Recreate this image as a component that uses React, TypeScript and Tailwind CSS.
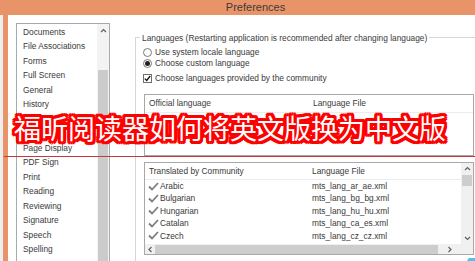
import React from "react";

const PAGES = [
  "Documents",
  "File Associations",
  "Forms",
  "Full Screen",
  "General",
  "History",
  "Identity",
  "Languages",
  "Page Display",
  "PDF Sign",
  "Print",
  "Reading",
  "Reviewing",
  "Signature",
  "Speech",
  "Spelling",
  "Trust Manager",
];

const COMMUNITY = [
  ["Arabic", "mts_lang_ar_ae.xml"],
  ["Bulgarian", "mts_lang_bg_bg.xml"],
  ["Hungarian", "mts_lang_hu_hu.xml"],
  ["Catalan", "mts_lang_ca_es.xml"],
  ["Czech", "mts_lang_cz_cz.xml"],
];

function Arrow({ dir }: { dir: "up" | "down" | "left" | "right" }) {
  const d = {
    up: "M1 4 L3.5 1.5 L6 4",
    down: "M1 2 L3.5 4.5 L6 2",
    left: "M4.5 1 L2 3.5 L4.5 6",
    right: "M2.5 1 L5 3.5 L2.5 6",
  }[dir];
  return (
    <svg width="7" height="7" viewBox="0 0 7 7" className="shrink-0">
      <path d={d} fill="none" stroke="#606060" strokeWidth="1.2" />
    </svg>
  );
}

function Check() {
  return (
    <svg width="11" height="9" viewBox="0 0 11 9" className="shrink-0">
      <path d="M1 4.5 L4 7.5 L10 1" fill="none" stroke="#7d7d7d" strokeWidth="1.8" />
    </svg>
  );
}

function Radio({ on }: { on?: boolean }) {
  return (
    <span className="flex h-[9px] w-[9px] shrink-0 items-center justify-center rounded-full border border-[#7a7a7a] bg-white">
      {on && <span className="h-[5px] w-[5px] rounded-full bg-[#222]" />}
    </span>
  );
}

export default function App() {
  return (
    <div className="relative h-[261px] w-[475px] overflow-hidden bg-white font-['Liberation_Sans',Arial,sans-serif] text-[8.35px] text-[#3a3a3a]">
      <div className="flex h-[15px] items-center justify-center bg-[#e99468] pl-[36px] text-[11px] text-[#3d3a38]">
        Preferences
      </div>
      <div className="flex h-[246px]">
        <div className="w-[3px] bg-[#eeeeee]" />
        <div className="w-[5px] bg-[#e99468]" />
        <div className="flex flex-1 pl-[8px] pt-[8px]">
          {/* page list */}
          <div className="flex h-[250px] w-[94px] shrink-0 border border-[#a4abb3] bg-white">
            <div className="flex-1 pt-[1px]">
              {PAGES.map((p) => (
                <div key={p} className="flex h-[14.5px] items-center pl-[6px]">
                  {p}
                </div>
              ))}
            </div>
            <div className="flex w-[12px] flex-col items-center bg-[#f3f3f3]">
              <div className="flex h-[15px] items-center">
                <Arrow dir="up" />
              </div>
              <div className="mt-[31px] w-[10px] flex-1 bg-[#cbcbcb]" />
            </div>
          </div>

          {/* languages group */}
          <div className="ml-[25px] mt-[14px] flex-1 border-l border-t border-[#d6d6d6] pl-[7px]">
            <div className="-ml-[3px] -mt-[5px] w-fit bg-white px-[2px] leading-[10px]">
              Languages (Restarting application is recommended after changing language)
            </div>
            <div className="mt-[3.5px] flex h-[11px] items-center gap-[3px]">
              <Radio />
              Use system locale language
            </div>
            <div className="flex h-[11px] items-center gap-[3px]">
              <Radio on />
              Choose custom language
            </div>
            <div className="mt-[4px] flex h-[11px] items-center gap-[3px]">
              <span className="flex h-[9px] w-[9px] shrink-0 items-center justify-center border border-[#707070] bg-white">
                <svg width="7" height="7" viewBox="0 0 7 7">
                  <path d="M0.8 3.6 L2.7 5.5 L6.2 1" fill="none" stroke="#111" strokeWidth="1.3" />
                </svg>
              </span>
              Choose languages provided by the community
            </div>

            {/* official languages */}
            <div className="ml-[1px] mt-[10.5px] h-[62px] w-[330px] border border-[#a8a8a8] bg-white">
              <div className="flex h-[18px] items-center border-b border-[#ececec]">
                <div className="w-[167px] pl-[4px]">Official language</div>
                <div className="pl-[1px]">Language File</div>
              </div>
            </div>

            {/* community languages */}
            <div className="ml-[1px] mt-[6px] flex h-[93px] w-[330px] flex-col border border-[#a8a8a8] bg-white">
              <div className="flex min-h-0 flex-1">
                <div className="flex-1">
                  <div className="flex h-[17px] items-center border-b border-[#ececec]">
                    <div className="w-[167px] pl-[4px]">Translated by Community</div>
                    <div>Language File</div>
                  </div>
                  {COMMUNITY.map(([name, file]) => (
                    <div key={name} className="flex h-[12.4px] items-center">
                      <div className="flex w-[167px] items-center gap-[1px] pl-[3px]">
                        <Check />
                        {name}
                      </div>
                      <div>{file}</div>
                    </div>
                  ))}
                </div>
                <div className="flex w-[12px] flex-col items-center bg-[#f0f0f0]">
                  <div className="flex h-[12px] items-center">
                    <Arrow dir="up" />
                  </div>
                  <div className="h-[11px] w-[10px] bg-[#cdcdcd]" />
                  <div className="flex-1" />
                  <div className="flex h-[12px] items-center">
                    <Arrow dir="down" />
                  </div>
                </div>
              </div>
              <div className="flex h-[10px] items-center bg-[#f0f0f0]">
                <div className="flex w-[10px] justify-center">
                  <Arrow dir="left" />
                </div>
                <div className="h-[9px] w-[283px] bg-[#cdcdcd]" />
                <div className="flex flex-1 justify-center">
                  <Arrow dir="right" />
                </div>
                <div className="h-full w-[12px] bg-[#f0f0f0]" />
              </div>
            </div>
          </div>
        </div>
      </div>

      {/* caption overlay */}
      <div className="absolute left-[14px] top-[110px] whitespace-nowrap font-['Noto_Sans_CJK_SC',sans-serif] text-[27px] leading-[36px] text-white [text-shadow:3px_0_0_#f00,-3px_0_0_#f00,0_3px_0_#f00,0_-3px_0_#f00,2px_2px_0_#f00,-2px_2px_0_#f00,2px_-2px_0_#f00,-2px_-2px_0_#f00,3px_2px_0_#f00,-3px_2px_0_#f00,3px_-2px_0_#f00,-3px_-2px_0_#f00,2px_3px_0_#f00,-2px_3px_0_#f00,2px_-3px_0_#f00,-2px_-3px_0_#f00,1px_1px_0_#f00,-1px_-1px_0_#f00]">
        福昕阅读器如何将英文版换为中文版
      </div>
      <div className="absolute left-[4px] right-0 top-[156px] h-[1px] bg-[#c23a3a]" />
      <div className="absolute bottom-[-3px] right-[-2px] h-[6px] w-[10px] -skew-x-[30deg] bg-[#4fc3e6]" />
    </div>
  );
}
